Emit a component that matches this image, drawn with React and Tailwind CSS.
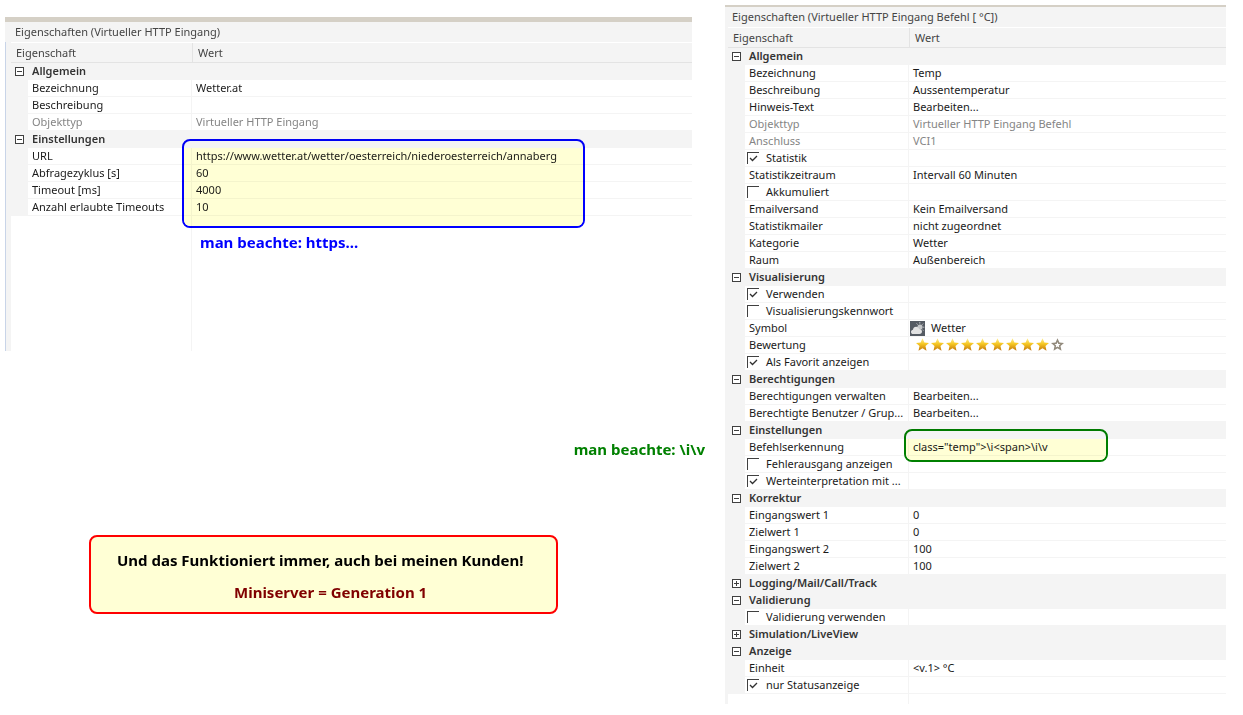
import React, { useId, useState } from "react";

const inputSections = [
  {
    title: "Allgemein",
    open: true,
    rows: [
      { name: "Bezeichnung", value: "Wetter.at" },
      { name: "Beschreibung", value: "" },
      { name: "Objekttyp", value: "Virtueller HTTP Eingang", readOnly: true }
    ]
  },
  {
    title: "Einstellungen",
    open: true,
    rows: [
      {
        name: "URL",
        value: "https://www.wetter.at/wetter/oesterreich/niederoesterreich/annaberg"
      },
      { name: "Abfragezyklus [s]", value: "60" },
      { name: "Timeout [ms]", value: "4000" },
      { name: "Anzahl erlaubte Timeouts", value: "10" }
    ]
  }
];

const commandSections = [
  {
    title: "Allgemein",
    open: true,
    rows: [
      { name: "Bezeichnung", value: "Temp" },
      { name: "Beschreibung", value: "Aussentemperatur" },
      { name: "Hinweis-Text", type: "button", value: "Bearbeiten..." },
      { name: "Objekttyp", value: "Virtueller HTTP Eingang Befehl", readOnly: true },
      { name: "Anschluss", value: "VCI1", readOnly: true },
      { name: "Statistik", type: "check", checked: true },
      { name: "Statistikzeitraum", value: "Intervall 60 Minuten" },
      { name: "Akkumuliert", type: "check", checked: false },
      { name: "Emailversand", value: "Kein Emailversand" },
      { name: "Statistikmailer", value: "nicht zugeordnet" },
      { name: "Kategorie", value: "Wetter" },
      { name: "Raum", value: "Außenbereich" }
    ]
  },
  {
    title: "Visualisierung",
    open: true,
    rows: [
      { name: "Verwenden", type: "check", checked: true },
      { name: "Visualisierungskennwort", type: "check", checked: false },
      { name: "Symbol", type: "symbol", value: "Wetter" },
      { name: "Bewertung", type: "stars", value: 9 },
      { name: "Als Favorit anzeigen", type: "check", checked: true }
    ]
  },
  {
    title: "Berechtigungen",
    open: true,
    rows: [
      { name: "Berechtigungen verwalten", type: "button", value: "Bearbeiten..." },
      { name: "Berechtigte Benutzer / Grup...", type: "button", value: "Bearbeiten..." }
    ]
  },
  {
    title: "Einstellungen",
    open: true,
    rows: [
      { name: "Befehlserkennung", value: 'class="temp">\\i<span>\\i\\v' },
      { name: "Fehlerausgang anzeigen", type: "check", checked: false },
      { name: "Werteinterpretation mit ...", type: "check", checked: true }
    ]
  },
  {
    title: "Korrektur",
    open: true,
    rows: [
      { name: "Eingangswert 1", value: "0" },
      { name: "Zielwert 1", value: "0" },
      { name: "Eingangswert 2", value: "100" },
      { name: "Zielwert 2", value: "100" }
    ]
  },
  { title: "Logging/Mail/Call/Track", open: false, rows: [] },
  {
    title: "Validierung",
    open: true,
    rows: [{ name: "Validierung verwenden", type: "check", checked: false }]
  },
  { title: "Simulation/LiveView", open: false, rows: [] },
  {
    title: "Anzeige",
    open: true,
    rows: [
      { name: "Einheit", value: "<v.1> °C" },
      { name: "nur Statusanzeige", type: "check", checked: true }
    ]
  }
];

const Toggle = ({ open }) => (
  <svg width="9" height="9" viewBox="0 0 9 9" shapeRendering="crispEdges" className="shrink-0">
    <rect x="0.5" y="0.5" width="8" height="8" fill="#fff" stroke="#404040" />
    <path d={open ? "M2 4.5h5" : "M2 4.5h5M4.5 2v5"} stroke="#404040" fill="none" />
  </svg>
);

const CheckBox = ({ id, label, defaultChecked }) => {
  const [checked, setChecked] = useState(defaultChecked);

  return (
    <div className="flex items-center gap-[7px] pl-[2px]">
      <span className="relative block h-3 w-3 shrink-0">
        <input
          id={id}
          type="checkbox"
          checked={checked}
          onChange={(e) => setChecked(e.target.checked)}
          className="block h-3 w-3 appearance-none border-t border-l border-[#404040] bg-white"
        />
        {checked && (
          <svg width="12" height="12" viewBox="0 0 12 12" className="pointer-events-none absolute inset-0">
            <path d="M3 6l2.500 2.500L10 4" fill="none" stroke="#303030" strokeWidth="1.3" />
          </svg>
        )}
      </span>
      <label htmlFor={id}>{label}</label>
    </div>
  );
};

const WeatherIcon = () => (
  <svg width="15" height="15" viewBox="0 0 15 15" className="shrink-0">
    <rect width="15" height="15" fill="#555b63" />
    <circle cx="10" cy="6" r="2.6" fill="#c4c6c8" />
    <path
      d="M9.8 1v1.6M13.2 2.6l-1.2 1.2M14.4 6.2h-1.6M13.4 9.6l-1-1M6.6 2.4l1 1.2"
      stroke="#c4c6c8"
      strokeWidth="0.9"
    />
    <path
      d="M3.2 13C1.8 13 1 12 1 10.900C1 9.700 1.900 8.900 3 8.800C3.200 7 4.400 5.800 6.100 5.800C7.600 5.800 8.600 6.600 9 7.900C10.700 7.800 12 8.900 12 10.500C12 12 11 13 9.600 13Z"
      fill="#e2e2e2"
    />
  </svg>
);

const starPath =
  "M6.5 0.300L8.400 4.400L13 4.900L9.500 8L10.500 12.700L6.500 10.300L2.500 12.700L3.500 8L0 4.900L4.600 4.400Z";

const Stars = ({ count }) => (
  <svg width="150" height="14" viewBox="0 0 150 14" role="img" aria-label={`${count} von 10 Sternen`}>
    <defs>
      <linearGradient id="gold" x1="0" y1="0" x2="0" y2="1">
        <stop offset="0" stopColor="#fff09a" />
        <stop offset="0.45" stopColor="#f6c722" />
        <stop offset="1" stopColor="#c4780c" />
      </linearGradient>
    </defs>
    {Array.from({ length: 10 }, (_, i) => (
      <g key={i} transform={`translate(${i * 15} 0)`}>
        {i < count ? (
          <path d={starPath} fill="url(#gold)" />
        ) : (
          <>
            <path d={starPath} fill="#928a7c" />
            <path
              d="M6.500 3.900L7.300 5.900L9.400 6.100L7.800 7.500L8.300 9.600L6.500 8.500L4.700 9.600L5.200 7.500L3.600 6.100L5.700 5.900Z"
              fill="#fff"
            />
          </>
        )}
      </g>
    ))}
  </svg>
);

const Value = ({ row }) => {
  if (row.type === "button") {
    return <button type="button" className="block pl-1">{row.value}</button>;
  }
  if (row.type === "symbol") {
    return (
      <div className="flex items-center gap-[6px] pl-px">
        <WeatherIcon />
        <span>{row.value}</span>
      </div>
    );
  }
  if (row.type === "stars") {
    return (
      <div className="flex items-center pl-[7px]">
        <Stars count={row.value} />
      </div>
    );
  }
  return <div className="truncate pl-1">{row.value}</div>;
};

const PropertyTable = ({ sections, fillerClass }) => {
  const id = useId();
  const [open, setOpen] = useState(sections.map((s) => s.open));

  const toggle = (index) => {
    setOpen(open.map((o, i) => (i === index ? !o : o)));
  };

  return (
    <table className="w-full table-fixed border-separate border-spacing-0 bg-white text-left text-[11px] leading-4">
      <colgroup>
        <col className="w-[17px]" />
        <col className="w-[164px]" />
        <col />
      </colgroup>
      <thead className="bg-[#f4f4f4] text-[#444]">
        <tr className="h-5">
          <th colSpan={2} className="border-b border-[#e3e3e3] p-0 pl-[5px] font-normal">
            Eigenschaft
          </th>
          <th className="border-b border-l border-[#e3e3e3] p-0 pl-[5px] font-normal">Wert</th>
        </tr>
      </thead>
      {sections.map((section, s) => (
        <tbody key={section.title}>
          <tr className="h-[17px] bg-[#f4f4f4]">
            <th colSpan={3} className="p-0 pb-px">
              <button
                type="button"
                aria-expanded={open[s]}
                onClick={() => toggle(s)}
                className="flex items-center gap-2 pl-1 font-semibold text-[#333]"
              >
                <Toggle open={open[s]} />
                {section.title}
              </button>
            </th>
          </tr>
          {open[s] &&
            section.rows.map((row, r) => (
              <tr
                key={row.name}
                className={row.readOnly ? "h-[17px] text-[#858585]" : "h-[17px] text-[#1a1a1a]"}
              >
                <td className="bg-[#f4f4f4] p-0" />
                {row.type === "check" ? (
                  <td className="border-r border-b border-[#f4f4f4] p-0 whitespace-nowrap">
                    <CheckBox
                      id={`${id}-${s}-${r}`}
                      label={row.name}
                      defaultChecked={row.checked}
                    />
                  </td>
                ) : (
                  <th
                    scope="row"
                    className="border-r border-b border-[#f4f4f4] p-0 pl-1 font-normal whitespace-nowrap"
                  >
                    {row.name}
                  </th>
                )}
                <td className="border-b border-[#f4f4f4] p-0">
                  {row.type !== "check" && <Value row={row} />}
                </td>
              </tr>
            ))}
        </tbody>
      ))}
      {/* empty rest of the grid */}
      <tbody>
        <tr className={fillerClass}>
          <td colSpan={2} className="border-r border-[#f4f4f4] p-0" />
          <td className="p-0" />
        </tr>
      </tbody>
    </table>
  );
};

const App = () => {
  return (
    <div className="flex items-start bg-white pt-[5px] pr-[17px] pl-[5px] font-['Noto_Sans','Open_Sans',sans-serif]">

      {/* Left side */}
      <div className="min-w-0 flex-[720] pt-3">
        <section className="relative mr-[33px] border-t-[5px] border-[#d5d0c6] bg-[#f4f4f4]">
          <h2 className="h-5 pl-[10px] text-[11px] leading-5 text-[#444]">
            Eigenschaften (Virtueller HTTP Eingang)
          </h2>
          <div className="border-l border-[#c8d4e8] pl-[5px]">
            <div className="border-t border-white">
              <PropertyTable sections={inputSections} fillerClass="h-[135px]" />
            </div>
          </div>

          {/* Marker */}
          <div className="pointer-events-none absolute top-[117px] left-[177px] h-[89px] w-[403px] overflow-hidden rounded-lg border-2 border-[#0000ff] pt-[7px] mix-blend-multiply">
            <div className="h-full bg-[#ffffd5]" />
          </div>
          <p className="absolute top-[210px] left-[195px] text-[15px] leading-5 font-bold text-[#0000ff]">
            man beachte: https...
          </p>
        </section>

        <p className="mt-[88px] pr-5 text-right text-[15px] leading-5 font-bold text-[#008000]">
          man beachte: \i\v
        </p>

        <div className="mt-[76px] ml-[84px] w-[469px] rounded-lg border-2 border-[#ff0000] bg-[#ffffd5] px-[26px] pt-[13px] pb-[10px] text-[15px] leading-5 font-bold">
          <p className="text-black">Und das Funktioniert immer, auch bei meinen Kunden!</p>
          <p className="mt-3 pl-[117px] text-[#800000]">Miniserver = Generation 1</p>
        </div>
      </div>

      {/* Right side */}
      <section className="relative min-w-0 flex-[501] border-t-2 border-[#d5d0c6] bg-[#f4f4f4]">
        <h2 className="h-5 pl-[7px] text-[11px] leading-5 text-[#444]">
          Eigenschaften (Virtueller HTTP Eingang Befehl [ °C])
        </h2>
        <div className="pl-[3px]">
          <div className="border-t border-white">
            <PropertyTable sections={commandSections} fillerClass="h-[10px]" />
          </div>
        </div>

        {/* Marker */}
        <div className="pointer-events-none absolute top-[422px] left-[179px] h-[33px] w-[204px] overflow-hidden rounded-lg border-2 border-[#008000] pt-2 mix-blend-multiply">
          <div className="h-full bg-[#ffffd5]" />
        </div>
      </section>
    </div>
  );
};

export default App;
